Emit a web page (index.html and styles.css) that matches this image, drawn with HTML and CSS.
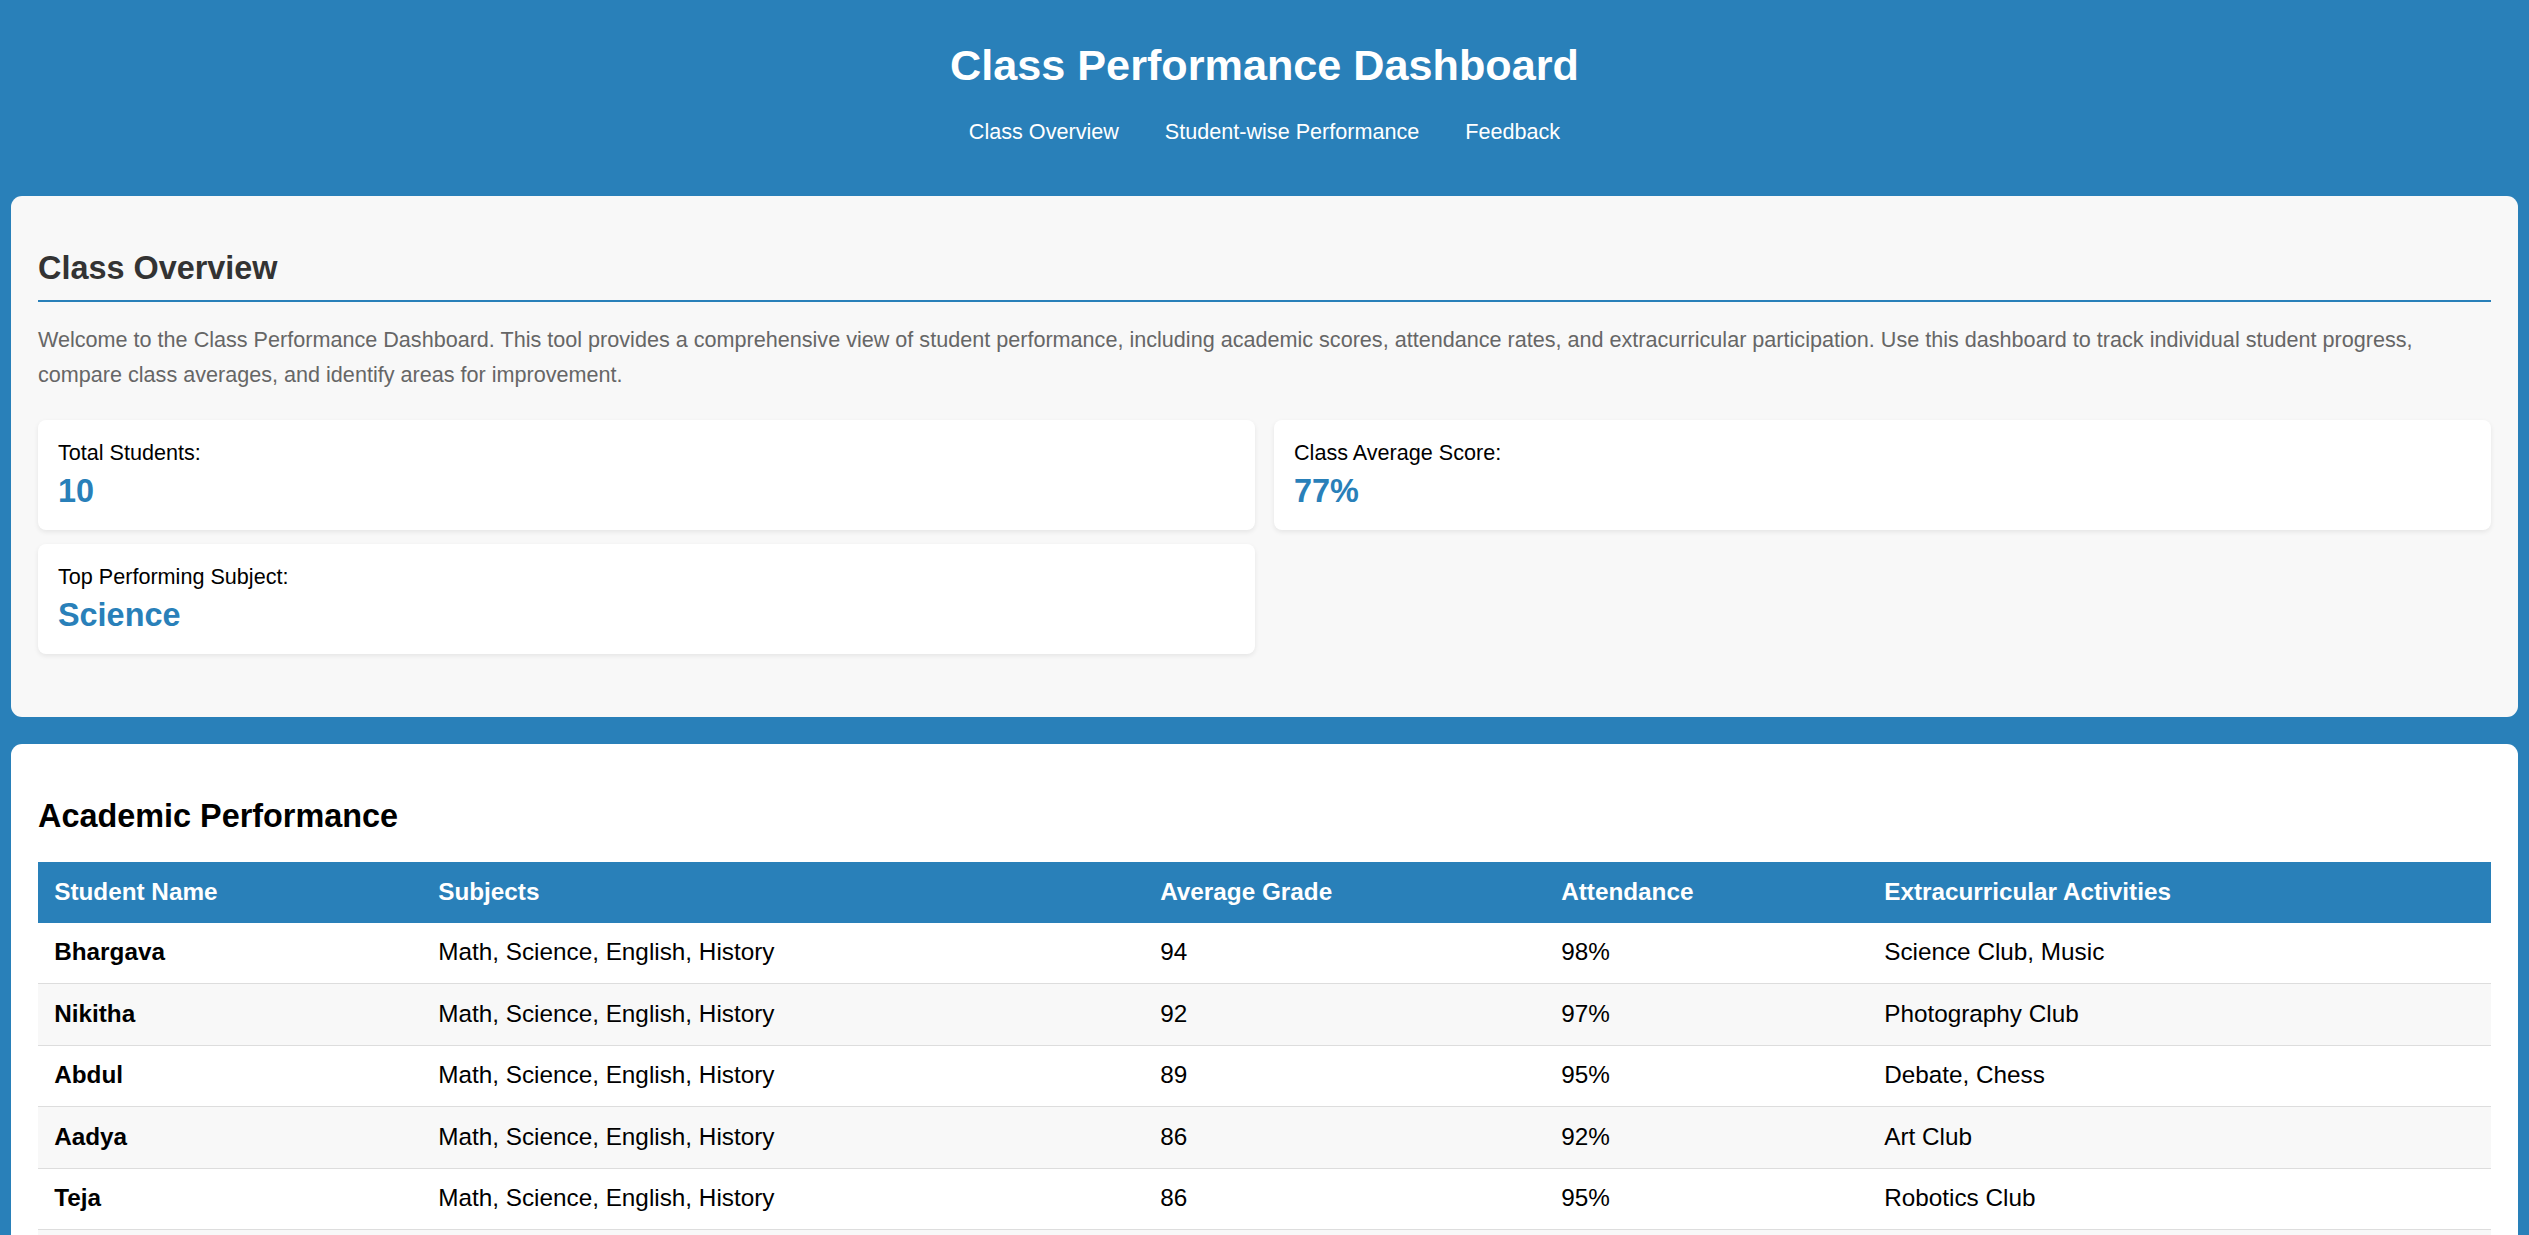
FILE: index.html
```html
<!DOCTYPE html>
<html lang="en">
<head>
<meta charset="utf-8">
<title>Class Performance Dashboard</title>
<link rel="stylesheet" href="styles.css">
</head>
<body>
<header class="site-header">
  <h1 class="site-title">Class Performance Dashboard</h1>
  <nav class="site-nav">
    <a class="nav-link" href="#overview">Class Overview</a>
    <a class="nav-link" href="#students">Student-wise Performance</a>
    <a class="nav-link" href="#feedback">Feedback</a>
  </nav>
</header>
<main class="content">
  <section class="panel panel-overview" id="overview">
    <h2 class="overview-title">Class Overview</h2>
    <p class="intro">Welcome to the Class Performance Dashboard. This tool provides a comprehensive view of student performance, including academic scores, attendance rates, and extracurricular participation. Use this dashboard to track individual student progress, compare class averages, and identify areas for improvement.</p>
    <div class="stats">
      <div class="stat-card">
        <div class="stat-label">Total Students:</div>
        <div class="stat-value">10</div>
      </div>
      <div class="stat-card">
        <div class="stat-label">Class Average Score:</div>
        <div class="stat-value">77%</div>
      </div>
      <div class="stat-card">
        <div class="stat-label">Top Performing Subject:</div>
        <div class="stat-value">Science</div>
      </div>
    </div>
  </section>
  <section class="panel panel-white" id="students">
    <h2 class="section-title">Academic Performance</h2>
    <table class="perf-table">
      <colgroup>
        <col class="col-name">
        <col class="col-subjects">
        <col class="col-grade">
        <col class="col-att">
        <col class="col-extra">
      </colgroup>
      <thead>
        <tr><th>Student Name</th><th>Subjects</th><th>Average Grade</th><th>Attendance</th><th>Extracurricular Activities</th></tr>
      </thead>
      <tbody>
        <tr><td class="name">Bhargava</td><td>Math, Science, English, History</td><td>94</td><td>98%</td><td>Science Club, Music</td></tr>
        <tr><td class="name">Nikitha</td><td>Math, Science, English, History</td><td>92</td><td>97%</td><td>Photography Club</td></tr>
        <tr><td class="name">Abdul</td><td>Math, Science, English, History</td><td>89</td><td>95%</td><td>Debate, Chess</td></tr>
        <tr><td class="name">Aadya</td><td>Math, Science, English, History</td><td>86</td><td>92%</td><td>Art Club</td></tr>
        <tr><td class="name">Teja</td><td>Math, Science, English, History</td><td>86</td><td>95%</td><td>Robotics Club</td></tr>
        <tr><td class="name">Rahul</td><td>Math, Science, English, History</td><td>78</td><td>90%</td><td>Football</td></tr>
        <tr><td class="name">Sneha</td><td>Math, Science, English, History</td><td>72</td><td>88%</td><td>Dance</td></tr>
        <tr><td class="name">Karthik</td><td>Math, Science, English, History</td><td>65</td><td>85%</td><td>Cricket</td></tr>
        <tr><td class="name">Priya</td><td>Math, Science, English, History</td><td>60</td><td>84%</td><td>Drama Club</td></tr>
        <tr><td class="name">Vikram</td><td>Math, Science, English, History</td><td>48</td><td>80%</td><td>Chess</td></tr>
      </tbody>
    </table>
  </section>
</main>
</body>
</html>
```
FILE: styles.css
```css
html, body {
  margin: 0;
  padding: 0;
}
body {
  background: #2980b9;
  font-family: "Liberation Sans", Arial, sans-serif;
  font-size: 21.6px;
  color: #000;
}
.site-header {
  text-align: center;
  color: #fff;
  padding: 41px 0 51px;
}
.site-title {
  margin: 0 0 29px;
  font-size: 43.2px;
  font-weight: bold;
  line-height: normal;
}
.site-nav {
  display: flex;
  justify-content: center;
  gap: 46px;
  line-height: normal;
}
.nav-link {
  color: #fff;
  text-decoration: none;
  font-size: 21.6px;
}
.content {
  padding: 0 11px;
}
.panel {
  border-radius: 11px;
  padding: 27px;
  margin-bottom: 27px;
}
.panel-overview {
  background: #f8f8f8;
}
.panel-white {
  background: #fff;
}
.overview-title {
  margin: 27px 0 0;
  font-size: 32.4px;
  line-height: normal;
  color: #333;
  padding-bottom: 13px;
  border-bottom: 2px solid #2980b9;
}
.intro {
  margin: 21px 0 28px;
  color: #666;
  line-height: 34.56px;
}
.stats {
  display: grid;
  grid-template-columns: 1fr 1fr;
  column-gap: 19px;
  row-gap: 14px;
  margin-bottom: 36px;
}
.stat-card {
  background: #fff;
  border-radius: 8px;
  padding: 20px;
  box-shadow: 0 2px 5px rgba(0, 0, 0, 0.08);
}
.stat-label {
  line-height: normal;
}
.stat-value {
  margin-top: 7px;
  font-size: 32.4px;
  font-weight: bold;
  color: #2980b9;
  line-height: normal;
}
.section-title {
  margin: 27px 0 27px;
  font-size: 32.4px;
  line-height: normal;
  color: #000;
}
.perf-table {
  width: 100%;
  border-collapse: collapse;
  table-layout: fixed;
  font-size: 24.3px;
}
.col-name { width: 384px; }
.col-subjects { width: 722px; }
.col-grade { width: 401px; }
.col-att { width: 323px; }
.perf-table th {
  background: #2980b9;
  color: #fff;
  text-align: left;
  font-weight: bold;
  padding: 10.8px 16.2px;
  line-height: 38.9px;
}
.perf-table td {
  padding: 10.8px 16.2px;
  line-height: 38.9px;
  border-bottom: 1px solid #ddd;
}
.perf-table tbody tr:nth-child(even) {
  background: #f8f8f8;
}
.perf-table td.name {
  font-weight: bold;
}
```
